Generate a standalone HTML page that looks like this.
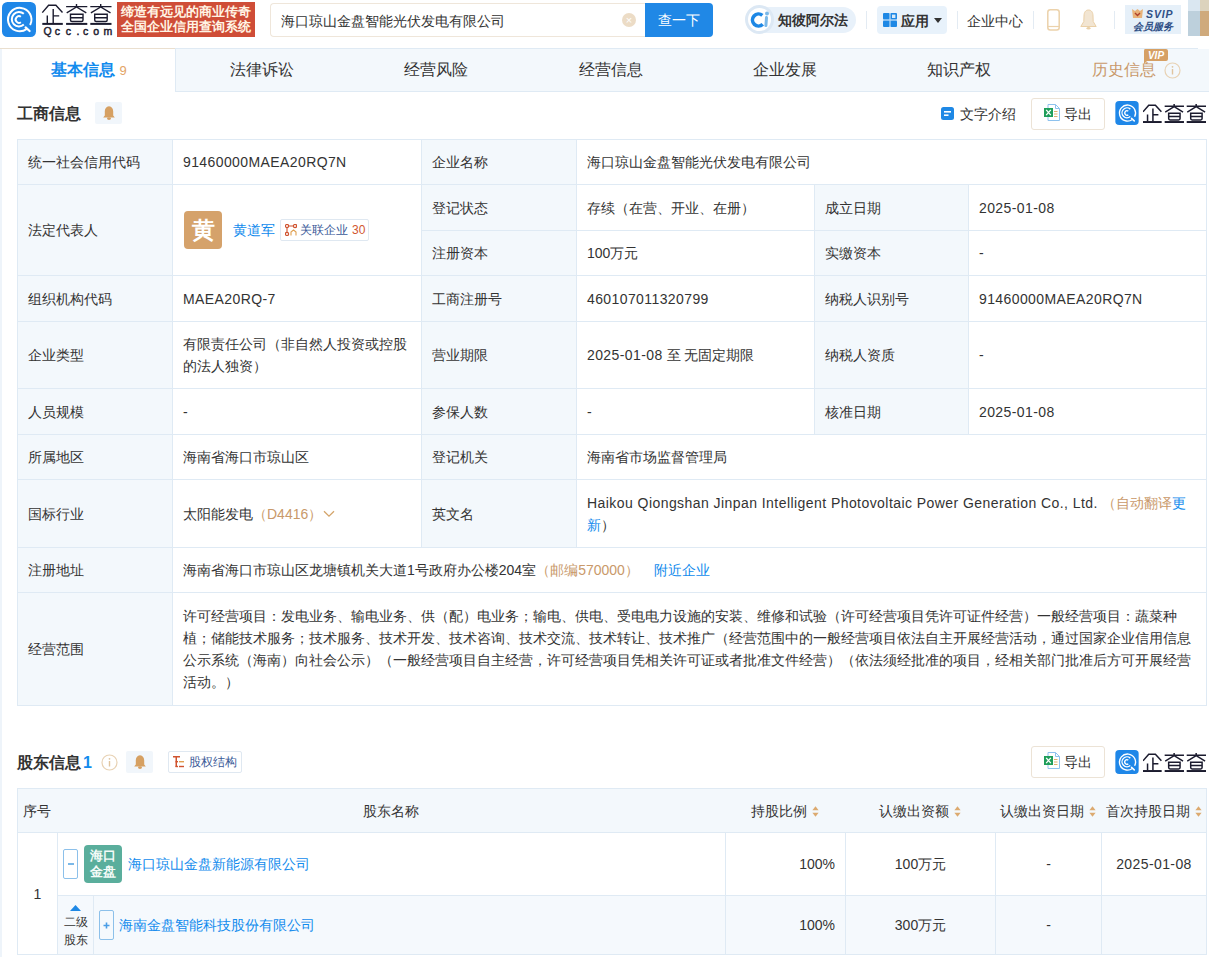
<!DOCTYPE html>
<html><head><meta charset="utf-8"><style>
*{box-sizing:border-box;margin:0;padding:0}
html,body{width:1209px;height:957px;overflow:hidden;background:#fff}
body{position:relative;font-family:"Liberation Sans",sans-serif;font-size:14px;color:#333}
.a{position:absolute}
.c{position:absolute;display:flex;align-items:center;padding-left:10px;line-height:22px;background:#fff}
.l{background:#f3f8fc}
.tab{position:absolute;top:48px;height:44px;display:flex;align-items:center;justify-content:center;font-size:16px;color:#333;background:#f3f8fc;border-left:1px solid #dfeaf4;border-bottom:1px solid #dfeaf4;border-top:1px solid #dfeaf4}
.blue{color:#128bed}
.tan{color:#c9996a}
.ls{letter-spacing:0.4px}
.vd{position:absolute;width:1px;background:#e3ebf3}
</style></head><body>
<svg class="a" style="left:2px;top:2px" width="34" height="35" viewBox="0 0 34 35"><rect x="0" y="0" width="34" height="35" rx="5.5" fill="#1f87e8"/>
<path d="M24.8 26.9 A11.7 11.7 0 1 1 28.1 23.0" fill="none" stroke="#fff" stroke-width="2"/>
<path d="M21.82 22.55 A7.2 7.2 0 1 1 21.82 11.85" fill="none" stroke="#fff" stroke-width="2"/>
<path d="M18.9 20.2 A3.3 3.3 0 1 1 18.9 14.8" fill="none" stroke="#fff" stroke-width="2"/>
<path d="M23.6 25.4 L27.6 29.0" stroke="#fff" stroke-width="2.2" stroke-linecap="round"/></svg>
<svg class="a" style="left:38px;top:0px" width="80" height="40" viewBox="0 0 80 40"><path d="M4.3 12.6 L10.6 5.3 L17.9 5.3 L24.5 12.4 M9.3 15.5 V23 M15.2 9 V23 M15.2 15.9 H21.2" fill="none" stroke="#1b1b2e" stroke-width="1.4"/><path d="M4.3 23.9 H24.8" stroke="#1b1b2e" stroke-width="2"/><path d="M38.5 4.0 V6.6 M28.1 6.6 H49.3 M38.5 7 L28.700000000000003 12.9 M38.5 7 L48.3 12.9 M32.5 14.2 H45.0 V20 Q45.0 21.5 43.5 21.5 H34.0 Q32.5 21.5 32.5 20 Z M32.5 17.7 H45.0" fill="none" stroke="#1b1b2e" stroke-width="1.4"/><path d="M28.1 23.9 H49.3" stroke="#1b1b2e" stroke-width="2"/><path d="M62.699999999999996 4.0 V6.6 M52.3 6.6 H73.5 M62.699999999999996 7 L52.9 12.9 M62.699999999999996 7 L72.5 12.9 M56.699999999999996 14.2 H69.19999999999999 V20 Q69.19999999999999 21.5 67.7 21.5 H58.199999999999996 Q56.699999999999996 21.5 56.699999999999996 20 Z M56.699999999999996 17.7 H69.19999999999999" fill="none" stroke="#1b1b2e" stroke-width="1.4"/><path d="M52.3 23.9 H73.5" stroke="#1b1b2e" stroke-width="2"/><text y="34.8" font-family="Liberation Sans" font-size="10.5" font-weight="normal" fill="#1b1b2e" stroke="#1b1b2e" stroke-width="0.45" x="5.4 16.8 27.8 38.4 45.0 55.2 65.6">Qcc.com</text></svg>
<div class="a" style="left:117px;top:2px;width:138px;height:35px;background:#cf4d37;color:#fff4e4;font-size:13px;font-weight:bold;line-height:14.5px;text-align:center;padding-top:3px;white-space:nowrap">缔造有远见的商业传奇<br>全国企业信用查询系统</div>
<div class="a" style="left:270px;top:3px;width:376px;height:34px;border:1px solid #efe6da;border-right:none;border-radius:4px 0 0 4px;background:#fff"></div>
<div class="a" style="left:281px;top:11px;font-size:14px;line-height:20px;color:#333;white-space:nowrap">海口琼山金盘智能光伏发电有限公司</div>
<div class="a" style="left:622px;top:13px;width:14px;height:14px;border-radius:7px;background:#ecdcc6"></div>
<div class="a" style="left:622px;top:13px;width:14px;height:14px;color:#fff;font-size:11px;line-height:14px;text-align:center">×</div>
<div class="a" style="left:645px;top:3px;width:68px;height:34px;background:#2088e6;border-radius:0 4px 4px 0;color:#fff;font-size:14px;line-height:34px;text-align:center">查一下</div>
<div class="a" style="left:746px;top:7px;width:110px;height:26px;border-radius:13px;background:#e8f1fa"></div>
<svg class="a" style="left:745px;top:5px" width="29" height="29" viewBox="0 0 29 29">
<circle cx="14.5" cy="14.5" r="13" fill="#fff" stroke="#dce8f4" stroke-width="3"/>
<path d="M17.36 10.4 A6 6 0 1 0 17.74 19.24" fill="none" stroke="#1e88e5" stroke-width="3.6"/>
<circle cx="22" cy="8.6" r="2" fill="#7ab8e8"/>
<path d="M21.5 12.6 L20.9 20.6" stroke="#7ab8e8" stroke-width="3" stroke-linecap="round"/>
</svg>
<div class="a" style="left:778px;top:10px;font-size:14px;line-height:20px;font-weight:bold;color:#333;white-space:nowrap">知彼阿尔法</div>
<div class="vd" style="left:866px;top:11px;height:18px"></div>
<div class="a" style="left:877px;top:6px;width:70px;height:28px;border-radius:4px;background:#e8f2fb"></div>
<svg class="a" style="left:883px;top:13px" width="15" height="15" viewBox="0 0 15 15">
<rect x="0" y="0" width="6.6" height="6.6" rx="1" fill="#1e88e5"/><rect x="7.4" y="0" width="6.6" height="6.6" rx="1" fill="#1e88e5"/><rect x="9" y="1.6" width="3.4" height="3.4" fill="#d8eaf8"/>
<rect x="0" y="7.4" width="6.6" height="6.6" rx="1" fill="#1e88e5"/><rect x="7.4" y="7.4" width="6.6" height="6.6" rx="1" fill="#1e88e5"/>
<rect x="6.6" y="0" width="0.8" height="14" fill="#8cc3f2"/><rect x="0" y="6.6" width="14" height="0.8" fill="#8cc3f2"/>
</svg>
<div class="a" style="left:901px;top:11px;font-size:14px;line-height:20px;font-weight:bold;color:#333;white-space:nowrap">应用</div>
<svg class="a" style="left:934px;top:18px" width="8" height="5" viewBox="0 0 8 5"><path d="M0 0 L8 0 L4 5 Z" fill="#333"/></svg>
<div class="vd" style="left:957px;top:11px;height:18px"></div>
<div class="a" style="left:967px;top:11px;font-size:14px;line-height:20px;color:#333;white-space:nowrap">企业中心</div>
<div class="vd" style="left:1033px;top:11px;height:18px"></div>
<svg class="a" style="left:1047px;top:9px" width="13" height="22" viewBox="0 0 13 22">
<rect x="0.8" y="0.8" width="11.4" height="20.2" rx="2.5" fill="none" stroke="#ecd2ab" stroke-width="1.5"/>
<path d="M1 17.5 H12" stroke="#ecd2ab" stroke-width="1.2"/></svg>
<svg class="a" style="left:1080px;top:9px" width="17" height="21" viewBox="0 0 17 21">
<path d="M8.5 1 C5.5 1 4 3.5 4 7 L3.8 12.5 L0.8 17.5 L16.2 17.5 L13.2 12.5 L13 7 C13 3.5 11.5 1 8.5 1 Z" fill="#f2e5d2" stroke="#ead0a8" stroke-width="1"/>
<ellipse cx="8.5" cy="19.3" rx="2" ry="1.3" fill="#ead0a8"/>
</svg>
<div class="vd" style="left:1114px;top:11px;height:18px"></div>
<div class="a" style="left:1125px;top:5px;width:56px;height:29px;background:#e6f0f9"></div>
<svg class="a" style="left:1132px;top:9px" width="11" height="9" viewBox="0 0 11 9">
<path d="M0 0 L3 2 L5.5 0 L8 2 L11 0 L10 9 L1 9 Z" fill="#e9b37a"/><path d="M3 4 L5.5 6.5 L8 4" stroke="#b0402a" stroke-width="1.4" fill="none"/>
</svg>
<div class="a" style="left:1146px;top:8px;font-size:10.5px;line-height:12px;font-weight:bold;font-style:italic;color:#2f4f86;white-space:nowrap;letter-spacing:0.9px">SVIP</div>
<div class="a" style="left:1133px;top:20px;font-size:10px;line-height:13px;font-weight:bold;font-style:italic;color:#2f4f86;white-space:nowrap">会员服务</div>
<div class="a" style="left:1188px;top:0px;width:12px;height:11px;background:#dae7f1"></div>
<div class="a" style="left:1200px;top:0px;width:9px;height:11px;background:#dcd3bd"></div>
<div class="a" style="left:1188px;top:11px;width:12px;height:25px;background:#bdd0dc"></div>
<div class="a" style="left:1200px;top:11px;width:9px;height:25px;background:#cfaa7c"></div>
<div class="a" style="left:0;top:48px;width:2px;height:909px;background:#eef4fa"></div>
<div class="a" style="left:0;top:48px;width:175px;height:1px;background:#eadfcf"></div>
<div class="a" style="left:175px;top:49px;width:1034px;height:43px;background:#f3f8fc;border-left:1px solid #dfeaf4;border-bottom:1px solid #dfeaf4"></div>
<div class="a" style="left:175px;top:48px;width:1023px;height:1px;background:#dfeaf4"></div>
<div class="a" style="left:161.6px;top:59px;width:200px;text-align:center;font-size:16px;line-height:22px;color:#333;white-space:nowrap">法律诉讼</div>
<div class="a" style="left:336.1px;top:59px;width:200px;text-align:center;font-size:16px;line-height:22px;color:#333;white-space:nowrap">经营风险</div>
<div class="a" style="left:510.5px;top:59px;width:200px;text-align:center;font-size:16px;line-height:22px;color:#333;white-space:nowrap">经营信息</div>
<div class="a" style="left:684.9px;top:59px;width:200px;text-align:center;font-size:16px;line-height:22px;color:#333;white-space:nowrap">企业发展</div>
<div class="a" style="left:859.4px;top:59px;width:200px;text-align:center;font-size:16px;line-height:22px;color:#333;white-space:nowrap">知识产权</div>
<div class="a" style="left:1023.8px;top:59px;width:200px;text-align:center;font-size:16px;line-height:22px;color:#333;white-space:nowrap"><span class="tan">历史信息</span></div>
<div class="a" style="left:51px;top:59px;font-size:16px;line-height:22px;font-weight:bold;color:#128bed;white-space:nowrap">基本信息 <span style="font-size:13px;font-weight:normal;color:#e3a466">9</span></div>
<svg class="a" style="left:1143px;top:49px" width="25" height="15" viewBox="0 0 25 15">
<path d="M2 0 H23 Q25 0 25 2 V10 Q25 12 23 12 H4 L1 15 L1 2 Q1 0 2 0 Z" fill="#d6a064"/>
<text x="13" y="10" font-family="Liberation Sans" font-size="10" font-weight="bold" font-style="italic" fill="#fff" text-anchor="middle">VIP</text>
</svg>
<svg class="a" style="left:1164px;top:62px" width="17" height="17" viewBox="0 0 17 17">
<circle cx="8.5" cy="8.5" r="7.5" fill="none" stroke="#e8d2b4" stroke-width="1.2"/>
<rect x="7.8" y="7" width="1.4" height="5.5" fill="#e0c49e"/><circle cx="8.5" cy="4.8" r="0.9" fill="#e0c49e"/>
</svg>
<div class="a" style="left:17px;top:103px;font-size:16px;line-height:22px;font-weight:bold;color:#333;white-space:nowrap">工商信息</div>
<div class="a" style="left:95px;top:102px;width:27px;height:22px;background:#f1f6fb;border-radius:2px"></div>
<svg class="a" style="left:103px;top:106px" width="12" height="14" viewBox="0 0 12 14">
<path d="M6 0.2 C8.8 0.6 10.2 2.6 10.2 5.2 L10.2 9.6 L11.8 11.6 L0.2 11.6 L1.8 9.6 L1.8 5.2 C1.8 2.6 3.2 0.6 6 0.2 Z" fill="#d6a062"/>
<ellipse cx="6" cy="12.6" rx="2" ry="1.3" fill="#d6a062"/></svg>
<svg class="a" style="left:941px;top:107px" width="14" height="14" viewBox="0 0 14 14">
<rect x="0" y="0" width="13" height="13" rx="2.5" fill="#1e88e5"/><rect x="3" y="4" width="7" height="1.6" fill="#fff"/><rect x="3" y="7.4" width="4.5" height="1.6" fill="#fff"/></svg>
<div class="a" style="left:960px;top:103px;font-size:14px;line-height:22px;color:#333;white-space:nowrap">文字介绍</div>
<div class="a" style="left:1031px;top:98px;width:74px;height:32px;border:1px solid #ece3d6;border-radius:3px"></div>
<svg class="a" style="left:1044px;top:104px" width="16" height="17" viewBox="0 0 16 17">
<path d="M4 0.5 H11.5 L15.5 4.5 V16.5 H4 Z" fill="#fff" stroke="#8ec2ee" stroke-width="1"/>
<path d="M11.5 0.5 V4.5 H15.5" fill="none" stroke="#8ec2ee" stroke-width="1"/>
<rect x="10" y="7" width="3.5" height="1" fill="#e0b070"/><rect x="10" y="9.5" width="3.5" height="1" fill="#e0b070"/><rect x="10" y="12" width="3.5" height="1" fill="#e0b070"/>
<rect x="0" y="4" width="9" height="9" fill="#1f9e5a"/>
<path d="M2.2 5.8 L6.8 11.2 M6.8 5.8 L2.2 11.2" stroke="#fff" stroke-width="1.3"/></svg>
<div class="a" style="left:1064px;top:103px;font-size:14px;line-height:22px;color:#333;white-space:nowrap">导出</div>
<svg class="a" style="left:1115px;top:101px" width="24" height="24" viewBox="0 0 34 35"><rect x="0" y="0" width="34" height="35" rx="5.5" fill="#1f87e8"/>
<path d="M24.8 26.9 A11.7 11.7 0 1 1 28.1 23.0" fill="none" stroke="#fff" stroke-width="2"/>
<path d="M21.82 22.55 A7.2 7.2 0 1 1 21.82 11.85" fill="none" stroke="#fff" stroke-width="2"/>
<path d="M18.9 20.2 A3.3 3.3 0 1 1 18.9 14.8" fill="none" stroke="#fff" stroke-width="2"/>
<path d="M23.6 25.4 L27.6 29.0" stroke="#fff" stroke-width="2.2" stroke-linecap="round"/></svg>
<svg class="a" style="left:1143px;top:104px" width="63" height="19" viewBox="4.3 4 69.2 20.9" preserveAspectRatio="none"><path d="M4.3 12.6 L10.6 5.3 L17.9 5.3 L24.5 12.4 M9.3 15.5 V23 M15.2 9 V23 M15.2 15.9 H21.2" fill="none" stroke="#1b1b2e" stroke-width="1.65"/><path d="M4.3 23.9 H24.8" stroke="#1b1b2e" stroke-width="2.3"/><path d="M38.5 4.0 V6.6 M28.1 6.6 H49.3 M38.5 7 L28.700000000000003 12.9 M38.5 7 L48.3 12.9 M32.5 14.2 H45.0 V20 Q45.0 21.5 43.5 21.5 H34.0 Q32.5 21.5 32.5 20 Z M32.5 17.7 H45.0" fill="none" stroke="#1b1b2e" stroke-width="1.65"/><path d="M28.1 23.9 H49.3" stroke="#1b1b2e" stroke-width="2.3"/><path d="M62.699999999999996 4.0 V6.6 M52.3 6.6 H73.5 M62.699999999999996 7 L52.9 12.9 M62.699999999999996 7 L72.5 12.9 M56.699999999999996 14.2 H69.19999999999999 V20 Q69.19999999999999 21.5 67.7 21.5 H58.199999999999996 Q56.699999999999996 21.5 56.699999999999996 20 Z M56.699999999999996 17.7 H69.19999999999999" fill="none" stroke="#1b1b2e" stroke-width="1.65"/><path d="M52.3 23.9 H73.5" stroke="#1b1b2e" stroke-width="2.3"/></svg>
<div class="a" style="left:17px;top:139px;width:1190px;height:567px;background:#dfeaf4"></div>
<div class="c l" style="left:18px;top:140px;width:154px;height:44px;"><div style="">统一社会信用代码</div></div>
<div class="c" style="left:173px;top:140px;width:248px;height:44px;"><div style=""><span class="ls">91460000MAEA20RQ7N</span></div></div>
<div class="c l" style="left:422px;top:140px;width:154px;height:44px;"><div style="">企业名称</div></div>
<div class="c" style="left:577px;top:140px;width:629px;height:44px;"><div style="">海口琼山金盘智能光伏发电有限公司</div></div>
<div class="c l" style="left:18px;top:185px;width:154px;height:90px;"><div style="">法定代表人</div></div>
<div class="c" style="left:173px;top:185px;width:248px;height:90px;padding-left:11px"><div style="display:flex;align-items:center"><div style="width:38px;height:38px;border-radius:4px;background:#d5a26b;color:#fff;font-size:23px;font-weight:bold;line-height:38px;text-align:center;flex:none">黄</div><span style="color:#128bed;margin-left:11px;white-space:nowrap">黄道军</span><span style="margin-left:5px;height:22px;border:1px solid #dfe8f1;border-radius:2px;display:flex;align-items:center;padding:0 3px 0 4px;font-size:12px;white-space:nowrap;color:#3a5a98"><svg width="12" height="12" viewBox="0 0 12 12" style="margin-right:3px"><circle cx="2" cy="2" r="1.6" fill="none" stroke="#d0532f" stroke-width="1.2"/><circle cx="10" cy="2" r="1.6" fill="none" stroke="#d0532f" stroke-width="1.2"/><circle cx="2" cy="10" r="1.6" fill="none" stroke="#d0532f" stroke-width="1.2"/><path d="M3.6 2 H8.4 M2 3.6 V8.4" stroke="#d0532f" stroke-width="1.1"/><path d="M6 11.5 V8 L8.5 6 L11 8 V11.5" fill="none" stroke="#e0a050" stroke-width="1.1"/></svg>关联企业<span style="color:#d2572f;margin-left:4px">30</span></span></div></div>
<div class="c l" style="left:422px;top:185px;width:154px;height:45px;"><div style="">登记状态</div></div>
<div class="c" style="left:577px;top:185px;width:237px;height:45px;"><div style="">存续（在营、开业、在册）</div></div>
<div class="c l" style="left:815px;top:185px;width:153px;height:45px;"><div style="">成立日期</div></div>
<div class="c" style="left:969px;top:185px;width:237px;height:45px;"><div style=""><span class="ls">2025-01-08</span></div></div>
<div class="c l" style="left:422px;top:231px;width:154px;height:44px;"><div style="">注册资本</div></div>
<div class="c" style="left:577px;top:231px;width:237px;height:44px;"><div style="">100万元</div></div>
<div class="c l" style="left:815px;top:231px;width:153px;height:44px;"><div style="">实缴资本</div></div>
<div class="c" style="left:969px;top:231px;width:237px;height:44px;"><div style="">-</div></div>
<div class="c l" style="left:18px;top:276px;width:154px;height:45px;"><div style="">组织机构代码</div></div>
<div class="c" style="left:173px;top:276px;width:248px;height:45px;"><div style=""><span class="ls">MAEA20RQ-7</span></div></div>
<div class="c l" style="left:422px;top:276px;width:154px;height:45px;"><div style="">工商注册号</div></div>
<div class="c" style="left:577px;top:276px;width:237px;height:45px;"><div style=""><span class="ls">460107011320799</span></div></div>
<div class="c l" style="left:815px;top:276px;width:153px;height:45px;"><div style="">纳税人识别号</div></div>
<div class="c" style="left:969px;top:276px;width:237px;height:45px;"><div style=""><span class="ls">91460000MAEA20RQ7N</span></div></div>
<div class="c l" style="left:18px;top:322px;width:154px;height:66px;"><div style="">企业类型</div></div>
<div class="c" style="left:173px;top:322px;width:248px;height:66px;padding-right:10px"><div style="">有限责任公司（非自然人投资或控股的法人独资）</div></div>
<div class="c l" style="left:422px;top:322px;width:154px;height:66px;"><div style="">营业期限</div></div>
<div class="c" style="left:577px;top:322px;width:237px;height:66px;"><div style=""><span class="ls">2025-01-08</span> 至 无固定期限</div></div>
<div class="c l" style="left:815px;top:322px;width:153px;height:66px;"><div style="">纳税人资质</div></div>
<div class="c" style="left:969px;top:322px;width:237px;height:66px;"><div style="">-</div></div>
<div class="c l" style="left:18px;top:389px;width:154px;height:45px;"><div style="">人员规模</div></div>
<div class="c" style="left:173px;top:389px;width:248px;height:45px;"><div style="">-</div></div>
<div class="c l" style="left:422px;top:389px;width:154px;height:45px;"><div style="">参保人数</div></div>
<div class="c" style="left:577px;top:389px;width:237px;height:45px;"><div style="">-</div></div>
<div class="c l" style="left:815px;top:389px;width:153px;height:45px;"><div style="">核准日期</div></div>
<div class="c" style="left:969px;top:389px;width:237px;height:45px;"><div style=""><span class="ls">2025-01-08</span></div></div>
<div class="c l" style="left:18px;top:435px;width:154px;height:44px;"><div style="">所属地区</div></div>
<div class="c" style="left:173px;top:435px;width:248px;height:44px;"><div style="">海南省海口市琼山区</div></div>
<div class="c l" style="left:422px;top:435px;width:154px;height:44px;"><div style="">登记机关</div></div>
<div class="c" style="left:577px;top:435px;width:629px;height:44px;"><div style="">海南省市场监督管理局</div></div>
<div class="c l" style="left:18px;top:480px;width:154px;height:67px;"><div style="">国标行业</div></div>
<div class="c" style="left:173px;top:480px;width:248px;height:67px;"><div style=""><span style="white-space:nowrap">太阳能发电<span class="tan">（D4416）</span><svg width="12" height="8" viewBox="0 0 12 8" style="margin-left:1px;vertical-align:1px"><path d="M1 1.2 L6 6.2 L11 1.2" fill="none" stroke="#d4a46a" stroke-width="1.3"/></svg></span></div></div>
<div class="c l" style="left:422px;top:480px;width:154px;height:67px;"><div style="">英文名</div></div>
<div class="c" style="left:577px;top:480px;width:629px;height:67px;padding-right:0px;white-space:nowrap"><div style=""><div><span style="letter-spacing:0.44px">Haikou Qiongshan Jinpan Intelligent Photovoltaic Power Generation Co., Ltd.</span> <span class="tan">（自动翻译</span><span class="blue">更<br>新</span>）</div></div></div>
<div class="c l" style="left:18px;top:548px;width:154px;height:44px;"><div style="">注册地址</div></div>
<div class="c" style="left:173px;top:548px;width:1033px;height:44px;"><div style=""><span style="white-space:nowrap">海南省海口市琼山区龙塘镇机关大道1号政府办公楼204室<span class="tan">（邮编570000）</span><span class="blue" style="margin-left:15px">附近企业</span></span></div></div>
<div class="c l" style="left:18px;top:593px;width:154px;height:112px;"><div style="">经营范围</div></div>
<div class="c" style="left:173px;top:593px;width:1033px;height:112px;padding-right:14px"><div style=""><div>许可经营项目：发电业务、输电业务、供（配）电业务；输电、供电、受电电力设施的安装、维修和试验（许可经营项目凭许可证件经营）一般经营项目：蔬菜种植；储能技术服务；技术服务、技术开发、技术咨询、技术交流、技术转让、技术推广（经营范围中的一般经营项目依法自主开展经营活动，通过国家企业信用信息公示系统（海南）向社会公示）（一般经营项目自主经营，许可经营项目凭相关许可证或者批准文件经营）（依法须经批准的项目，经相关部门批准后方可开展经营活动。）</div></div></div>
<div class="a" style="left:17px;top:752px;font-size:16px;line-height:22px;font-weight:bold;color:#333;white-space:nowrap">股东信息<span style="color:#128bed;margin-left:2px">1</span></div>
<svg class="a" style="left:101px;top:754px" width="17" height="17" viewBox="0 0 17 17">
<circle cx="8.5" cy="8.5" r="7.5" fill="none" stroke="#e8d2b4" stroke-width="1.2"/>
<rect x="7.8" y="7" width="1.4" height="5.5" fill="#e0c49e"/><circle cx="8.5" cy="4.8" r="0.9" fill="#e0c49e"/></svg>
<div class="a" style="left:126px;top:751px;width:27px;height:22px;background:#f1f6fb;border-radius:2px"></div>
<svg class="a" style="left:134px;top:755px" width="12" height="14" viewBox="0 0 12 14">
<path d="M6 0.2 C8.8 0.6 10.2 2.6 10.2 5.2 L10.2 9.6 L11.8 11.6 L0.2 11.6 L1.8 9.6 L1.8 5.2 C1.8 2.6 3.2 0.6 6 0.2 Z" fill="#d6a062"/>
<ellipse cx="6" cy="12.6" rx="2" ry="1.3" fill="#d6a062"/></svg>
<div class="a" style="left:168px;top:751px;width:74px;height:22px;border:1px solid #dfe8f1;border-radius:2px"></div>
<svg class="a" style="left:173px;top:756px" width="12" height="12" viewBox="0 0 12 12">
<rect x="0" y="0" width="7" height="1.5" fill="#d0532f"/><rect x="2.5" y="0" width="1.5" height="11" fill="#d0532f"/>
<rect x="2.5" y="5" width="2.5" height="1.4" fill="#d0532f"/><rect x="6" y="5" width="5" height="1.4" fill="#e0a050"/>
<rect x="2.5" y="9.8" width="2.5" height="1.4" fill="#d0532f"/><rect x="6" y="9.8" width="5" height="1.4" fill="#d0532f"/></svg>
<div class="a" style="left:189px;top:753px;font-size:12px;line-height:18px;color:#3a5a98;white-space:nowrap">股权结构</div>
<div class="a" style="left:1031px;top:746px;width:74px;height:32px;border:1px solid #ece3d6;border-radius:3px"></div>
<svg class="a" style="left:1044px;top:752px" width="16" height="17" viewBox="0 0 16 17">
<path d="M4 0.5 H11.5 L15.5 4.5 V16.5 H4 Z" fill="#fff" stroke="#8ec2ee" stroke-width="1"/>
<path d="M11.5 0.5 V4.5 H15.5" fill="none" stroke="#8ec2ee" stroke-width="1"/>
<rect x="10" y="7" width="3.5" height="1" fill="#e0b070"/><rect x="10" y="9.5" width="3.5" height="1" fill="#e0b070"/><rect x="10" y="12" width="3.5" height="1" fill="#e0b070"/>
<rect x="0" y="4" width="9" height="9" fill="#1f9e5a"/>
<path d="M2.2 5.8 L6.8 11.2 M6.8 5.8 L2.2 11.2" stroke="#fff" stroke-width="1.3"/></svg>
<div class="a" style="left:1064px;top:751px;font-size:14px;line-height:22px;color:#333;white-space:nowrap">导出</div>
<svg class="a" style="left:1115px;top:750px" width="24" height="24" viewBox="0 0 34 35"><rect x="0" y="0" width="34" height="35" rx="5.5" fill="#1f87e8"/>
<path d="M24.8 26.9 A11.7 11.7 0 1 1 28.1 23.0" fill="none" stroke="#fff" stroke-width="2"/>
<path d="M21.82 22.55 A7.2 7.2 0 1 1 21.82 11.85" fill="none" stroke="#fff" stroke-width="2"/>
<path d="M18.9 20.2 A3.3 3.3 0 1 1 18.9 14.8" fill="none" stroke="#fff" stroke-width="2"/>
<path d="M23.6 25.4 L27.6 29.0" stroke="#fff" stroke-width="2.2" stroke-linecap="round"/></svg>
<svg class="a" style="left:1143px;top:753px" width="63" height="19" viewBox="4.3 4 69.2 20.9" preserveAspectRatio="none"><path d="M4.3 12.6 L10.6 5.3 L17.9 5.3 L24.5 12.4 M9.3 15.5 V23 M15.2 9 V23 M15.2 15.9 H21.2" fill="none" stroke="#1b1b2e" stroke-width="1.65"/><path d="M4.3 23.9 H24.8" stroke="#1b1b2e" stroke-width="2.3"/><path d="M38.5 4.0 V6.6 M28.1 6.6 H49.3 M38.5 7 L28.700000000000003 12.9 M38.5 7 L48.3 12.9 M32.5 14.2 H45.0 V20 Q45.0 21.5 43.5 21.5 H34.0 Q32.5 21.5 32.5 20 Z M32.5 17.7 H45.0" fill="none" stroke="#1b1b2e" stroke-width="1.65"/><path d="M28.1 23.9 H49.3" stroke="#1b1b2e" stroke-width="2.3"/><path d="M62.699999999999996 4.0 V6.6 M52.3 6.6 H73.5 M62.699999999999996 7 L52.9 12.9 M62.699999999999996 7 L72.5 12.9 M56.699999999999996 14.2 H69.19999999999999 V20 Q69.19999999999999 21.5 67.7 21.5 H58.199999999999996 Q56.699999999999996 21.5 56.699999999999996 20 Z M56.699999999999996 17.7 H69.19999999999999" fill="none" stroke="#1b1b2e" stroke-width="1.65"/><path d="M52.3 23.9 H73.5" stroke="#1b1b2e" stroke-width="2.3"/></svg>
<div class="a" style="left:17px;top:788px;width:1190px;height:167px;background:#dfeaf4"></div>
<div class="a" style="left:18px;top:789px;width:1188px;height:43px;background:#f3f8fc"></div>
<div class="a" style="left:-113px;top:800px;width:300px;text-align:center;line-height:22px;white-space:nowrap">序号</div>
<div class="a" style="left:241px;top:800px;width:300px;text-align:center;line-height:22px;white-space:nowrap">股东名称</div>
<div class="a" style="left:635px;top:800px;width:300px;text-align:center;line-height:22px;white-space:nowrap">持股比例<svg width="7" height="11" viewBox="0 0 7 11" style="margin-left:5px;vertical-align:middle;position:relative;top:-1px"><path d="M3.5 0.3 L6.6 4.2 L0.4 4.2 Z" fill="#dcaa70"/><path d="M3.5 10.7 L6.6 6.8 L0.4 6.8 Z" fill="#dcaa70"/></svg></div>
<div class="a" style="left:770px;top:800px;width:300px;text-align:center;line-height:22px;white-space:nowrap">认缴出资额<svg width="7" height="11" viewBox="0 0 7 11" style="margin-left:5px;vertical-align:middle;position:relative;top:-1px"><path d="M3.5 0.3 L6.6 4.2 L0.4 4.2 Z" fill="#dcaa70"/><path d="M3.5 10.7 L6.6 6.8 L0.4 6.8 Z" fill="#dcaa70"/></svg></div>
<div class="a" style="left:898px;top:800px;width:300px;text-align:center;line-height:22px;white-space:nowrap">认缴出资日期<svg width="7" height="11" viewBox="0 0 7 11" style="margin-left:5px;vertical-align:middle;position:relative;top:-1px"><path d="M3.5 0.3 L6.6 4.2 L0.4 4.2 Z" fill="#dcaa70"/><path d="M3.5 10.7 L6.6 6.8 L0.4 6.8 Z" fill="#dcaa70"/></svg></div>
<div class="a" style="left:1004px;top:800px;width:300px;text-align:center;line-height:22px;white-space:nowrap">首次持股日期<svg width="7" height="11" viewBox="0 0 7 11" style="margin-left:5px;vertical-align:middle;position:relative;top:-1px"><path d="M3.5 0.3 L6.6 4.2 L0.4 4.2 Z" fill="#dcaa70"/><path d="M3.5 10.7 L6.6 6.8 L0.4 6.8 Z" fill="#dcaa70"/></svg></div>
<div class="a" style="left:18px;top:833px;width:39px;height:121px;background:#fff;display:flex;align-items:center;line-height:22px;justify-content:center">1</div>
<div class="a" style="left:58px;top:833px;width:667px;height:62px;background:#fff;display:flex;align-items:center;line-height:22px;"><div style="margin-left:5px;width:15px;height:30px;border:1px solid #8cc0ea;border-radius:2px;display:flex;align-items:center;justify-content:center"><div style="width:6px;height:1.5px;background:#7ab8e8"></div></div><div style="margin-left:6px;width:38px;height:38px;border-radius:4px;background:#5aae9c;color:#f4fbf8;font-size:13px;font-weight:bold;line-height:16px;text-align:center;padding-top:3px;flex:none">海口<br>金盘</div><span style="color:#128bed;margin-left:6px;white-space:nowrap">海口琼山金盘新能源有限公司</span></div>
<div class="a" style="left:726px;top:833px;width:119px;height:62px;background:#fff;display:flex;align-items:center;line-height:22px;justify-content:flex-end;padding-right:10px">100%</div>
<div class="a" style="left:846px;top:833px;width:149px;height:62px;background:#fff;display:flex;align-items:center;line-height:22px;justify-content:center">100万元</div>
<div class="a" style="left:996px;top:833px;width:105px;height:62px;background:#fff;display:flex;align-items:center;line-height:22px;justify-content:center">-</div>
<div class="a" style="left:1102px;top:833px;width:104px;height:62px;background:#fff;display:flex;align-items:center;line-height:22px;justify-content:center"><span class="ls">2025-01-08</span></div>
<div class="a" style="left:58px;top:896px;width:35px;height:58px;background:#f5f9fd;display:flex;align-items:center;line-height:22px;"><div style="width:100%;text-align:center;font-size:12px;line-height:17.6px;padding-top:4px"><svg width="11" height="6" viewBox="0 0 11 6" style="display:block;margin:0 auto 3px"><path d="M5.5 0 L11 6 L0 6 Z" fill="#1e88e5"/></svg>二级<br>股东</div></div>
<div class="a" style="left:94px;top:896px;width:631px;height:58px;background:#f5f9fd;display:flex;align-items:center;line-height:22px;"><div style="margin-left:5px;width:15px;height:30px;border:1px solid #8cc0ea;border-radius:2px;display:flex;align-items:center;justify-content:center"><svg width="7" height="7" viewBox="0 0 7 7"><path d="M3.5 0.5 V6.5 M0.5 3.5 H6.5" stroke="#4a9de6" stroke-width="1.6"/></svg></div><span style="color:#128bed;margin-left:5px;white-space:nowrap">海南金盘智能科技股份有限公司</span></div>
<div class="a" style="left:726px;top:896px;width:119px;height:58px;background:#f5f9fd;display:flex;align-items:center;line-height:22px;justify-content:flex-end;padding-right:10px">100%</div>
<div class="a" style="left:846px;top:896px;width:149px;height:58px;background:#f5f9fd;display:flex;align-items:center;line-height:22px;justify-content:center">300万元</div>
<div class="a" style="left:996px;top:896px;width:105px;height:58px;background:#f5f9fd;display:flex;align-items:center;line-height:22px;justify-content:center">-</div>
<div class="a" style="left:1102px;top:896px;width:104px;height:58px;background:#f5f9fd;display:flex;align-items:center;line-height:22px;"></div>
</body></html>
